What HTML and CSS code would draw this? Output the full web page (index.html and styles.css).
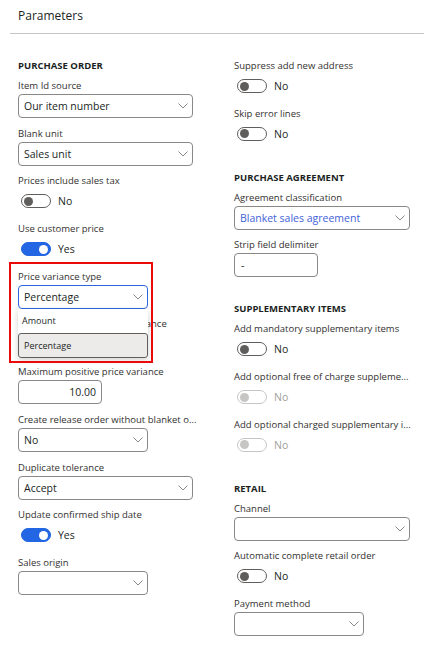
FILE: index.html
```html
<!DOCTYPE html>
<html lang="en">
<head>
<meta charset="utf-8">
<title>Parameters</title>
<link rel="stylesheet" href="styles.css">
</head>
<body>
<div class="page">
  <header class="title-bar"><h1>Parameters</h1></header>
  <div class="columns">
    <div class="col">
      <section class="group">
        <h2>PURCHASE ORDER</h2>
        <div class="field">
          <span class="label">Item Id source</span>
          <div class="select w-l"><span class="value">Our item number</span><svg class="chev" width="10" height="6" viewBox="0 0 10 6"><path d="M0.5 0.5L5 5L9.5 0.5"/></svg></div>
        </div>
        <div class="field">
          <span class="label">Blank unit</span>
          <div class="select w-l"><span class="value">Sales unit</span><svg class="chev" width="10" height="6" viewBox="0 0 10 6"><path d="M0.5 0.5L5 5L9.5 0.5"/></svg></div>
        </div>
        <div class="field">
          <span class="label">Prices include sales tax</span>
          <div class="toggle-row"><span class="toggle"><span class="knob"></span></span><span class="toggle-text">No</span></div>
        </div>
        <div class="field">
          <span class="label">Use customer price</span>
          <div class="toggle-row"><span class="toggle on"><span class="knob"></span></span><span class="toggle-text">Yes</span></div>
        </div>
        <div class="field">
          <span class="label">Price variance type</span>
          <div class="select w-m focused"><span class="value">Percentage</span><svg class="chev" width="10" height="6" viewBox="0 0 10 6"><path d="M0.5 0.5L5 5L9.5 0.5"/></svg></div>
          <div class="dropdown-list">
            <div class="option">Amount</div>
            <div class="option selected">Percentage</div>
          </div>
          <div class="annotation"></div>
        </div>
        <div class="field">
          <span class="label">Maximum negative price variance</span>
          <div class="input w-s num">10.00</div>
        </div>
        <div class="field">
          <span class="label">Maximum positive price variance</span>
          <div class="input w-s num">10.00</div>
        </div>
        <div class="field">
          <span class="label">Create release order without blanket o...</span>
          <div class="select w-m"><span class="value">No</span><svg class="chev" width="10" height="6" viewBox="0 0 10 6"><path d="M0.5 0.5L5 5L9.5 0.5"/></svg></div>
        </div>
        <div class="field">
          <span class="label">Duplicate tolerance</span>
          <div class="select w-l"><span class="value">Accept</span><svg class="chev" width="10" height="6" viewBox="0 0 10 6"><path d="M0.5 0.5L5 5L9.5 0.5"/></svg></div>
        </div>
        <div class="field">
          <span class="label">Update confirmed ship date</span>
          <div class="toggle-row"><span class="toggle on"><span class="knob"></span></span><span class="toggle-text">Yes</span></div>
        </div>
        <div class="field">
          <span class="label">Sales origin</span>
          <div class="select w-m"><span class="value"></span><svg class="chev" width="10" height="6" viewBox="0 0 10 6"><path d="M0.5 0.5L5 5L9.5 0.5"/></svg></div>
        </div>
      </section>
    </div>
    <div class="col">
      <section class="group">
        <div class="field">
          <span class="label">Suppress add new address</span>
          <div class="toggle-row"><span class="toggle"><span class="knob"></span></span><span class="toggle-text">No</span></div>
        </div>
        <div class="field">
          <span class="label">Skip error lines</span>
          <div class="toggle-row"><span class="toggle"><span class="knob"></span></span><span class="toggle-text">No</span></div>
        </div>
      </section>
      <section class="group">
        <h2>PURCHASE AGREEMENT</h2>
        <div class="field">
          <span class="label">Agreement classification</span>
          <div class="select w-r"><span class="value link">Blanket sales agreement</span><svg class="chev" width="10" height="6" viewBox="0 0 10 6"><path d="M0.5 0.5L5 5L9.5 0.5"/></svg></div>
        </div>
        <div class="field">
          <span class="label">Strip field delimiter</span>
          <div class="input w-s">-</div>
        </div>
      </section>
      <section class="group">
        <h2>SUPPLEMENTARY ITEMS</h2>
        <div class="field">
          <span class="label">Add mandatory supplementary items</span>
          <div class="toggle-row"><span class="toggle"><span class="knob"></span></span><span class="toggle-text">No</span></div>
        </div>
        <div class="field">
          <span class="label">Add optional free of charge suppleme...</span>
          <div class="toggle-row disabled"><span class="toggle"><span class="knob"></span></span><span class="toggle-text">No</span></div>
        </div>
        <div class="field">
          <span class="label">Add optional charged supplementary i...</span>
          <div class="toggle-row disabled"><span class="toggle"><span class="knob"></span></span><span class="toggle-text">No</span></div>
        </div>
      </section>
      <section class="group">
        <h2>RETAIL</h2>
        <div class="field">
          <span class="label">Channel</span>
          <div class="select w-r"><span class="value"></span><svg class="chev" width="10" height="6" viewBox="0 0 10 6"><path d="M0.5 0.5L5 5L9.5 0.5"/></svg></div>
        </div>
        <div class="field">
          <span class="label">Automatic complete retail order</span>
          <div class="toggle-row"><span class="toggle"><span class="knob"></span></span><span class="toggle-text">No</span></div>
        </div>
        <div class="field">
          <span class="label">Payment method</span>
          <div class="select w-m"><span class="value"></span><svg class="chev" width="10" height="6" viewBox="0 0 10 6"><path d="M0.5 0.5L5 5L9.5 0.5"/></svg></div>
        </div>
      </section>
    </div>
  </div>
</div>
</body>
</html>
```

FILE: styles.css
```css
* { box-sizing: border-box; }
html, body { margin: 0; padding: 0; background: #ffffff; }
body {
  font-family: "Open Sans", "Noto Sans", sans-serif;
  color: #201f1e;
  width: 424px;
  height: 649px;
  overflow: hidden;
}
.title-bar {
  margin-left: 10px;
  height: 34px;
  padding-left: 8px;
  border-bottom: 1px solid #c8c6c4;
}
.title-bar h1 {
  margin: 0;
  font-size: 12px;
  font-weight: 400;
  line-height: 31px;
  color: #201f1e;
}
.columns {
  display: grid;
  grid-template-columns: 200px 1fr;
  column-gap: 16px;
  padding: 24px 0 0 18px;
}
.group + .group { margin-top: 24px; }
.group h2 {
  margin: 0 0 5px;
  font-size: 9.5px;
  font-weight: 700;
  line-height: 15px;
  color: #201f1e;
}
.field {
  position: relative;
  margin-bottom: 7.7px;
}
.label {
  display: block;
  font-size: 9.5px;
  line-height: 16px;
  color: #323130;
  white-space: nowrap;
}
.select, .input {
  height: 24px;
  border: 1px solid #8a8886;
  border-radius: 4px;
  background: #fff;
  font-size: 10.5px;
  color: #201f1e;
}
.select {
  display: flex;
  align-items: center;
  justify-content: space-between;
  padding: 0 4px 0 5px;
}
.select.focused { border-color: #2b66dd; }
.chev path { fill: none; stroke: #8a8886; stroke-width: 1; }
.value.link { color: #4262d8; }
.input {
  display: flex;
  align-items: center;
  padding: 0 5px 0 6px;
}
.input.num { justify-content: flex-end; }
.w-l { width: 175px; }
.w-r { width: 176px; }
.w-m { width: 130px; }
.w-s { width: 84px; }

.toggle-row {
  height: 24px;
  display: flex;
  align-items: center;
  gap: 7px;
  padding-left: 3px;
}
.toggle {
  position: relative;
  width: 30px;
  height: 14px;
  border: 1px solid #605e5c;
  border-radius: 7px;
  background: #fff;
}
.toggle .knob {
  position: absolute;
  top: 1.5px;
  left: 2px;
  width: 9px;
  height: 9px;
  border-radius: 50%;
  background: #605e5c;
}
.toggle.on { background: #2266e3; border-color: #2266e3; }
.toggle.on .knob { left: auto; right: 2px; background: #fff; }
.toggle-text { font-size: 10.5px; color: #201f1e; }
.disabled .toggle { border-color: #c8c6c4; }
.disabled .toggle .knob { background: #c8c6c4; }
.disabled .toggle-text { color: #a19f9d; }

.dropdown-list {
  position: absolute;
  left: 0;
  top: 40px;
  width: 130px;
  background: #fff;
  box-shadow: 0 2px 6px rgba(0, 0, 0, 0.18);
  z-index: 2;
}
.option {
  height: 24px;
  display: flex;
  align-items: center;
  padding-left: 4px;
  font-size: 9px;
  color: #201f1e;
}
.option.selected {
  height: 25px;
  padding-left: 5px;
  background: #edebe9;
  border: 1px solid #605e5c;
  border-radius: 3px;
}
.annotation {
  position: absolute;
  left: -9px;
  top: -7px;
  width: 144px;
  height: 101px;
  border: 2px solid #ea0a0a;
  z-index: 3;
  pointer-events: none;
}
```
